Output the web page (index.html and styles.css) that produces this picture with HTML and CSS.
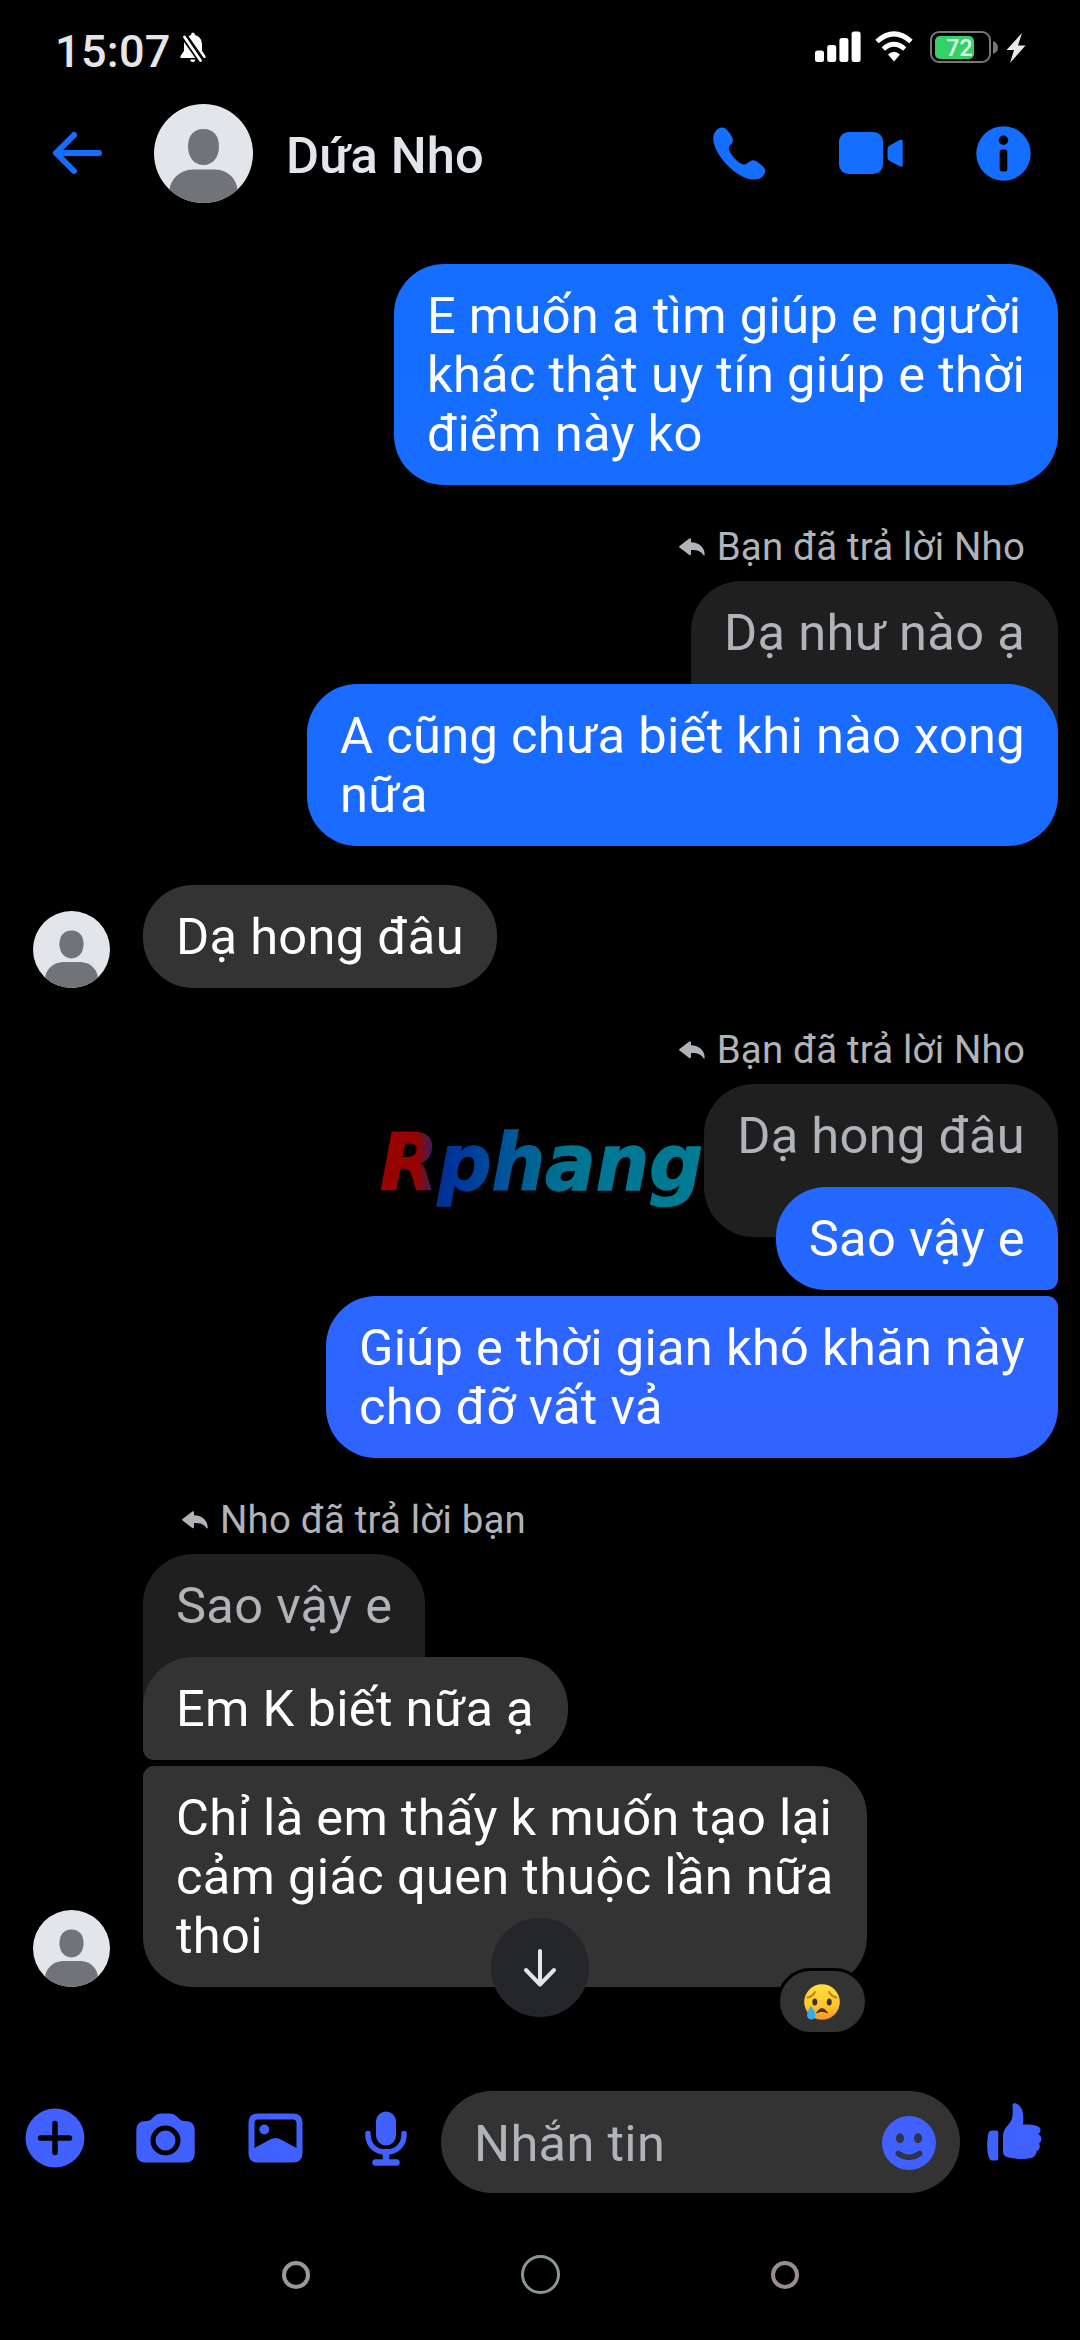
FILE: index.html
```html
<!DOCTYPE html>
<html lang="vi">
<head>
<meta charset="utf-8">
<title>Dứa Nho</title>
<link rel="stylesheet" href="styles.css">
</head>
<body>
<svg width="0" height="0" class="defs" aria-hidden="true">
  <defs>
    <symbol id="person" viewBox="0 0 99 99">
      <clipPath id="round"><circle cx="49.5" cy="49.5" r="49.5"/></clipPath>
      <circle cx="49.5" cy="49.5" r="49.5" fill="#e2e5ea"/>
      <g clip-path="url(#round)" fill="#707479">
        <path d="M49.5 25C59.500 25 65 32 65 42.500C65 53 59 61 49.500 61C40 61 34 53 34 42.500C34 32 39.500 25 49.500 25Z"/>
        <path d="M39 65.500H61C75 65.500 83.500 77 83.500 87V99H15.500V87C15.500 77 25 65.500 39 65.500Z"/>
      </g>
    </symbol>
    <symbol id="reply" viewBox="0 0 26 18">
      <path d="M0.500 8L10.300 0.500Q12 -0.200 12 1.700V4.300C20 4.600 25.500 9 25.700 16.500Q25.500 18.500 24.300 16.900C21.500 12.800 18 11.900 12 12V15.800Q12 17.800 10.300 17L0.500 9.600Q-0.300 8.800 0.500 8Z" fill="#b0b3b8"/>
    </symbol>
  </defs>
</svg>
<div class="phone">
  <div class="status">
    <span class="clock">15:07</span>
    <svg class="bell" width="26" height="31" viewBox="0 0 26 31">
      <path fill="#fff" d="M13 0.500Q15 0.500 15 3C20 4.500 22 8 22 13V19L25.500 24V26H0.500V24L4 19V13C4 8 6.500 4.500 11 3Q11 0.500 13 0.500ZM10 27.500H15.500Q15 30 12.700 30Q10.500 30 10 27.500Z"/>
      <path d="M2 1L23 31" stroke="#000" stroke-width="7"/>
      <path d="M4.500 5L20.500 28.500" stroke="#fff" stroke-width="2.800" stroke-linecap="round"/>
    </svg>
    <div class="status-right">
      <svg width="46" height="31" viewBox="0 0 46 31" fill="#fff">
        <rect x="0" y="19.500" width="9" height="11.500" rx="2.500"/><rect x="12.200" y="14" width="9" height="17" rx="2.500"/><rect x="24.400" y="7" width="9" height="24" rx="2.500"/><rect x="36.600" y="0.500" width="9" height="30.500" rx="2.500"/>
      </svg>
      <svg class="wifi" width="38" height="31" viewBox="0 0 38 31" fill="none" stroke="#fff" stroke-width="5">
        <path d="M2 10.500Q19 -4.700 36 10.500"/><path d="M8.300 18Q19 8.500 29.700 18"/><path d="M13 23.500Q19 18 25 23.500L19 30.500Z" fill="#fff" stroke="none"/>
      </svg>
      <div class="battery"><span>72</span></div>
      <svg class="nub" width="5" height="13" viewBox="0 0 5 13"><path d="M0 0Q5 2 5 6.500Q5 11 0 13Z" fill="#777"/></svg>
      <svg class="bolt" width="20" height="30" viewBox="0 0 20 30"><path d="M16 0L0.500 17H8L4 30L19.500 12.500H12Z" fill="#e8e8e8"/></svg>
    </div>
  </div>

  <div class="header">
    <svg class="back" width="50" height="44" viewBox="0 0 50 44" fill="none" stroke="#146eff" stroke-width="6" stroke-linecap="round" stroke-linejoin="round"><path d="M22 4L4 22L22 40M4 22H47"/></svg>
    <svg class="face" width="99" height="99"><use href="#person"/></svg>
    <h1>Dứa Nho</h1>
    <div class="actions">
      <svg width="53" height="53" viewBox="0 0 53 53"><path fill="#146eff" d="M5.500 1.500C10 -1 13.500 1 16.500 6C18 8.500 20.500 11 19.700 14.500C19 17.500 15.500 19 15.800 21.500C17 27.500 24.500 36 30.500 37.500C33.500 38 35.500 34 39 33.400C42 32.800 44 34.500 47 37C51 39.500 53 42.500 51.800 46C49.500 52 43 53.500 36 52C20 48 1.500 27 0.300 13C0 8 1.500 4 5.500 1.500Z"/></svg>
      <svg width="64" height="43" viewBox="0 0 64 43" fill="#146eff"><rect width="44" height="42" rx="9.500"/><path d="M48.500 17Q48.500 14.800 50.300 13.700L61 7.800Q63.700 6.700 63.700 9.300V33Q63.700 35.500 61.300 34.500L50.300 28.700Q48.500 27.500 48.500 25.500Z"/></svg>
      <svg width="55" height="55" viewBox="0 0 55 55"><circle cx="27.500" cy="27.500" r="27.200" fill="#146eff"/><circle cx="27.500" cy="14.300" r="4.700"/><rect x="23.700" y="23.500" width="7.600" height="22" rx="2.500"/></svg>
    </div>
  </div>

  <div class="chat">
    <div class="bubble out b1">E muốn a tìm giúp e người<br>khác thật uy tín giúp e thời<br>điểm này ko</div>

    <div class="label out-label"><svg width="26" height="18"><use href="#reply"/></svg><span>Bạn đã trả lời Nho</span></div>
    <div class="bubble out quote quote-flat">Dạ như nào ạ</div>
    <div class="bubble out b2">A cũng chưa biết khi nào xong<br>nữa</div>

    <div class="incoming solo">
      <svg width="77" height="77"><use href="#person"/></svg>
      <div class="bubble">Dạ hong đâu</div>
    </div>

    <div class="label out-label second"><svg width="26" height="18"><use href="#reply"/></svg><span>Bạn đã trả lời Nho</span></div>
    <div class="bubble out quote">Dạ hong đâu</div>
    <div class="bubble out b3">Sao vậy e</div>
    <div class="bubble out b4">Giúp e thời gian khó khăn này<br>cho đỡ vất vả</div>

    <div class="label in-label"><svg width="26" height="18"><use href="#reply"/></svg><span>Nho đã trả lời bạn</span></div>
    <div class="bubble in quote quote-flat">Sao vậy e</div>
    <div class="bubble in b5">Em K biết nữa ạ</div>
    <div class="incoming last">
      <svg width="77" height="77"><use href="#person"/></svg>
      <div class="bubble b6">Chỉ là em thấy k muốn tạo lại<br>cảm giác quen thuộc lần nữa<br>thoi
        <div class="reaction">
          <svg width="36" height="36" viewBox="0 0 36 36">
            <defs><linearGradient id="skin" x2="0" y2="1"><stop stop-color="#ffe03b"/><stop offset=".6" stop-color="#fdc72d"/><stop offset="1" stop-color="#f2942c"/></linearGradient></defs>
            <circle cx="18" cy="18" r="17.800" fill="url(#skin)"/>
            <path d="M3.500 13.500Q8.500 12.500 11 8M32.500 13.500Q27.500 12.500 25 8" fill="none" stroke="#c47b16" stroke-width="1.800" stroke-linecap="round"/>
            <ellipse cx="10.800" cy="18" rx="2.500" ry="3.600" fill="#38322d"/><ellipse cx="25.200" cy="18" rx="2.500" ry="3.600" fill="#38322d"/>
            <path d="M12.500 29Q18 20 23.500 29Q18 25.800 12.500 29Z" fill="#553018" stroke="#553018" stroke-linejoin="round"/>
            <path d="M7 22Q11.500 28 11.500 31Q11 35.500 7.200 35.500Q3.200 35 3 31Q3 28 7 22Z" fill="#37abe6"/>
          </svg>
        </div>
      </div>
    </div>

    <svg class="watermark" width="330" height="90" viewBox="0 0 330 90">
      <defs><linearGradient id="ink" gradientUnits="userSpaceOnUse" x1="0" y1="0" x2="330" y2="0"><stop offset=".12" stop-color="#960300"/><stop offset=".19" stop-color="#003096"/><stop offset=".25" stop-color="#00389c"/><stop offset=".42" stop-color="#005b96"/><stop offset=".58" stop-color="#007592"/><stop offset="1" stop-color="#007c94"/></linearGradient></defs>
      <text x="2" y="65" textLength="323" lengthAdjust="spacingAndGlyphs" fill="url(#ink)" stroke="url(#ink)" stroke-width="1.500">Rphang</text>
    </svg>
    <div class="scroll-down"><svg width="34" height="40" viewBox="0 0 34 40" fill="none" stroke="#e4e6eb" stroke-width="4" stroke-linecap="round" stroke-linejoin="round"><path d="M17 3V36M3 22L17 36.500L31 22"/></svg></div>
  </div>

  <div class="composer">
    <svg class="plus" width="60" height="60" viewBox="0 0 60 60"><circle cx="30" cy="30" r="29.500" fill="#4060ff"/><path d="M30 15.500V44.500M15.500 30H44.500" stroke="#000" stroke-width="5.500" stroke-linecap="round"/></svg>
    <svg class="camera" width="59" height="50" viewBox="0 0 59 50"><path fill="#4060ff" d="M18 3.500Q21 0.500 25 0.500H34Q38 0.500 41 3.500L44 6.500Q46 8 49 8Q58.700 8 58.700 17V40Q58.700 49.500 49.500 49.500H9.500Q0.300 49.500 0.300 40V17Q0.300 8 10 8Q13 8 15 6.500Z"/><circle cx="29.500" cy="27.500" r="12.500" fill="none" stroke="#000" stroke-width="5"/></svg>
    <svg class="photo" width="55" height="50" viewBox="0 0 55 50"><path fill="#4060ff" fill-rule="evenodd" d="M10 0.500H45Q54.500 0.500 54.500 10V40Q54.500 49.500 45 49.500H10Q0.500 49.500 0.500 40V10Q0.500 0.500 10 0.500ZM10 6.500Q6.500 6.500 6.500 10V35L22 26.500Q27.500 23.500 33 26.500L48.500 35V10Q48.500 6.500 45 6.500Z"/><circle cx="16.300" cy="16.500" r="5" fill="#4060ff"/></svg>
    <svg class="mic" width="42" height="55" viewBox="0 0 42 55" fill="none" stroke="#4060ff"><rect x="11" y="0.500" width="20" height="34" rx="10" fill="#4060ff" stroke="none"/><path d="M3 22.500V24C3 34.500 11 41 21 41S39 34.500 39 24V22.500" stroke-width="5.500" stroke-linecap="round"/><path d="M21 41V51M10.500 51.500H31.500" stroke-width="6.500" stroke-linecap="round"/></svg>
    <div class="field"><span>Nhắn tin</span>
      <svg width="54" height="54" viewBox="0 0 54 54"><circle cx="27" cy="27" r="27" fill="#4060ff"/><ellipse cx="18" cy="22.300" rx="4" ry="5" fill="#2f334a"/><ellipse cx="36" cy="22.300" rx="4" ry="5" fill="#2f334a"/><path d="M16.300 37.500Q27 45 37.700 37.500" fill="none" stroke="#2f334a" stroke-width="5.500" stroke-linecap="round"/></svg>
    </div>
    <svg class="thumb" width="55" height="58" viewBox="0 0 55 58" fill="#4060ff"><path d="M25.500 2C25.500 -0.500 29 0 31.500 2C36 5 37 12 36 21.500C44 21.500 50 22 52.500 24.500C54.500 26.500 53.500 29.500 51.500 31C55 33 55.500 38 52 40.500C54 43.500 52 47.500 49.500 48.500C49.500 51.500 47 54.500 44 55C37 56.500 28 56 22 54.500C18.500 54 16 52 16 48.500V33C16 28 18.500 25 21.500 21.500C26 16.500 26 12 25.500 2Z"/><path d="M3 28Q3.500 27.500 5 27.500H9.500Q11.300 27.500 11.300 29.500V55.500Q11.300 57.500 9.500 57.500H5Q3 57.500 2 55C-0.300 48 -0.300 37 1.500 30Q2 28.500 3 28Z"/></svg>
  </div>

  <div class="nav"><i></i><i class="home"></i><i class="recent"></i></div>
</div>
</body>
</html>
```
FILE: styles.css
```css
* { box-sizing: border-box; }
body { margin: 0; background: #000; font-family: Roboto, "Noto Sans", sans-serif; }
svg { display: block; flex: none; overflow: visible; }
.defs { position: absolute; }
.phone { width: 1080px; height: 2340px; display: flex; flex-direction: column; overflow: hidden; background: #000; }

.status { height: 94px; padding: 31px 54px 0 55px; display: flex; align-items: flex-start; color: #e6e6e6; }
.clock { width: 118px; padding-top: 1px; font-size: 45px; line-height: 40px; font-weight: 500; letter-spacing: 0.3px; white-space: nowrap; }
.bell { margin: 1px 0 0 7px; }
.status-right { margin-left: auto; display: flex; align-items: flex-start; }
.wifi { margin-left: 14px; }
.battery { width: 61px; height: 32px; margin-left: 17px; padding: 2.5px; border: 2px solid #777; border-radius: 9px; }
.battery span { display: block; width: 39px; height: 23px; padding-right: 1px; border-radius: 5px; background: #36d068; color: #e4ffec; font-size: 23px; line-height: 25px; font-weight: 500; text-align: right; }
.nub { margin: 10px 0 0 2px; }
.bolt { margin: 2px 0 0 8px; }

.header { height: 119px; padding: 0 49px 0 52px; display: flex; align-items: center; }
.back, .actions svg { margin-bottom: 1px; }
.face { margin-left: 52px; }
.header h1 { margin: 3px 0 0 33px; font-size: 50.6px; line-height: 59px; font-weight: 500; letter-spacing: 0.2px; color: #e2e5ea; white-space: nowrap; }
.actions { margin-left: auto; display: flex; align-items: center; gap: 73px; }

.chat { position: relative; height: 1860px; padding: 51px 22px 0 33px; display: flex; flex-direction: column; align-items: flex-start; }
.bubble { position: relative; flex: none; padding: 22px 33px; border-radius: 50px; background: #333; color: #fff; font-size: 50.6px; line-height: 59px; letter-spacing: 0.3px; white-space: nowrap; }
.out { align-self: flex-end; }
.in { margin-left: 110px; }
.b1 { background: linear-gradient(#146eff, #176dff); }
.b2 { background: #1a6bff; }
.b3 { background: #2568ff; border-bottom-right-radius: 11px; }
.b4 { margin-top: 6px; background: linear-gradient(#2b66ff, #3063ff); border-top-right-radius: 11px; }
.b5 { padding-right: 34px; border-bottom-left-radius: 11px; }
.b6 { border-top-left-radius: 11px; }
.quote { height: 153px; margin-bottom: -50px; background: #1f1f1f; color: #b0b3b8; }
.quote.out { border-bottom-right-radius: 0; }
.quote.in { border-bottom-left-radius: 0; }
.quote-flat { border-bottom-left-radius: 0; border-bottom-right-radius: 0; }

.label { height: 45px; margin: 39px 0 12px; display: flex; align-items: center; gap: 12px; font-size: 38.4px; line-height: 45px; letter-spacing: 0.2px; color: #b0b3b8; white-space: nowrap; }
.out-label { align-self: flex-end; padding-right: 33px; }
.in-label { padding-left: 149px; }
.incoming { display: flex; align-items: flex-end; gap: 33px; }
.solo { margin-top: 39px; }
.last { margin-top: 6px; }

.reaction { position: absolute; right: -1px; bottom: -48px; width: 91px; height: 67px; display: flex; align-items: center; justify-content: center; background: #333; border: 3px solid #000; border-radius: 34px; }
.watermark { position: absolute; left: 378px; top: 912px; }
.watermark text { font: italic bold 78px "DejaVu Sans", sans-serif; }
.scroll-down { position: absolute; left: 491px; top: 1705px; width: 98px; height: 99px; display: flex; align-items: center; justify-content: center; border-radius: 50%; background: #252629; }

.composer { height: 138px; padding: 0 38px 0 25px; display: flex; align-items: center; }
.plus { margin-top: -8px; }
.camera { margin: -8px 0 0 51px; }
.photo { margin: -8px 0 0 53px; }
.mic { margin: -8px 0 0 62px; }
.field { width: 520px; height: 102px; margin-left: 34px; padding: 2px 24px 0 33px; display: flex; align-items: center; justify-content: space-between; border-radius: 51px; background: #333; color: #b0b3b8; font-size: 50.6px; letter-spacing: 0.3px; }
.thumb { margin: -20px 0 0 27px; }

.nav { height: 127px; display: flex; align-items: center; justify-content: center; gap: 211px; }
.nav i { width: 28px; height: 28px; border: 4px solid #999; border-radius: 50%; }
.nav .home { width: 39px; height: 39px; border: 3.500px solid #899596; }
.nav .recent { border-color: #988c8e; }
```
